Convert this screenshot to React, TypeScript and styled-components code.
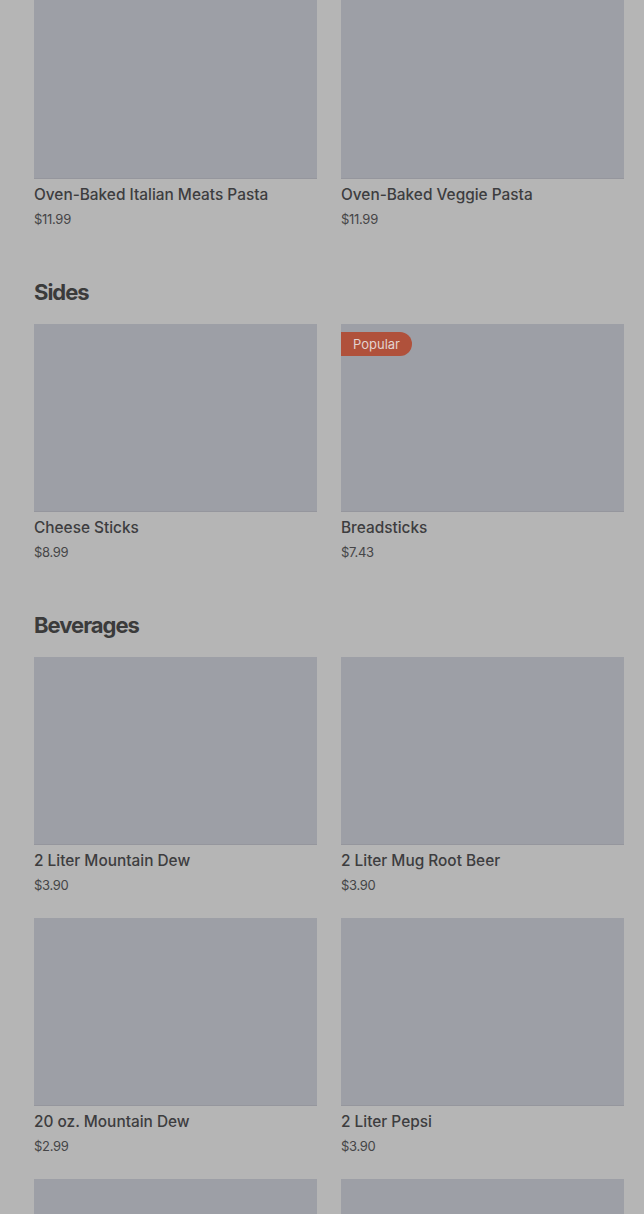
import React from "react";
import styled, { createGlobalStyle } from "styled-components";

const Global = createGlobalStyle`
  html, body { margin: 0; padding: 0; background: #b5b5b5; }
  body { font-family: Inter, "Liberation Sans", Arial, sans-serif; overflow: hidden; }
`;

const Page = styled.div`
  padding: 0 20px 0 34px;
  height: 1214px;
  overflow: hidden;
  background: #b5b5b5;
`;

const Section = styled.section<{ $first?: boolean }>`
  display: flex;
  flex-direction: column;
  margin-top: ${(p) => (p.$first ? "-9px" : "0")};
  padding-bottom: 48px;
`;

const Heading = styled.h2`
  margin: 0 0 16px;
  height: 32px;
  line-height: 32px;
  font-size: 22px;
  font-weight: 700;
  letter-spacing: -1px;
  color: #3b3b3b;
`;

const Grid = styled.div`
  display: grid;
  grid-template-columns: 1fr 1fr;
  column-gap: 24px;
  row-gap: 24px;
`;

const Card = styled.div`
  display: flex;
  flex-direction: column;
`;

const Thumb = styled.div`
  position: relative;
  height: 188px;
  background: #9d9fa6;
  box-shadow: inset 0 -1px 0 rgba(0, 0, 0, 0.05);
`;

const Badge = styled.span`
  position: absolute;
  top: 8px;
  left: 0;
  height: 24px;
  padding: 0 12px;
  display: flex;
  align-items: center;
  background: #b0513b;
  color: #e3d3cf;
  font-size: 13px;
  border-radius: 0 12px 12px 0;
`;

const Name = styled.div`
  margin-top: 4px;
  line-height: 24px;
  font-size: 15.4px;
  font-weight: 500;
  color: #3d3d3f;
`;

const Price = styled.div`
  margin-top: 3px;
  line-height: 18px;
  font-size: 13px;
  color: #454547;
  letter-spacing: -0.3px;
`;

type Item = { name?: string; price?: string; popular?: boolean };

const sections: { title?: string; items: Item[] }[] = [
  {
    items: [
      { name: "Oven-Baked Italian Meats Pasta", price: "$11.99" },
      { name: "Oven-Baked Veggie Pasta", price: "$11.99" },
    ],
  },
  {
    title: "Sides",
    items: [
      { name: "Cheese Sticks", price: "$8.99" },
      { name: "Breadsticks", price: "$7.43", popular: true },
    ],
  },
  {
    title: "Beverages",
    items: [
      { name: "2 Liter Mountain Dew", price: "$3.90" },
      { name: "2 Liter Mug Root Beer", price: "$3.90" },
      { name: "20 oz. Mountain Dew", price: "$2.99" },
      { name: "2 Liter Pepsi", price: "$3.90" },
      {},
      {},
    ],
  },
];

export default function App() {
  return (
    <>
      <Global />
      <Page>
        {sections.map((s, i) => (
          <Section key={i} $first={i === 0}>
            {s.title && <Heading>{s.title}</Heading>}
            <Grid>
              {s.items.map((it, j) => (
                <Card key={j}>
                  <Thumb>{it.popular && <Badge>Popular</Badge>}</Thumb>
                  {it.name && <Name>{it.name}</Name>}
                  {it.price && <Price>{it.price}</Price>}
                </Card>
              ))}
            </Grid>
          </Section>
        ))}
      </Page>
    </>
  );
}
